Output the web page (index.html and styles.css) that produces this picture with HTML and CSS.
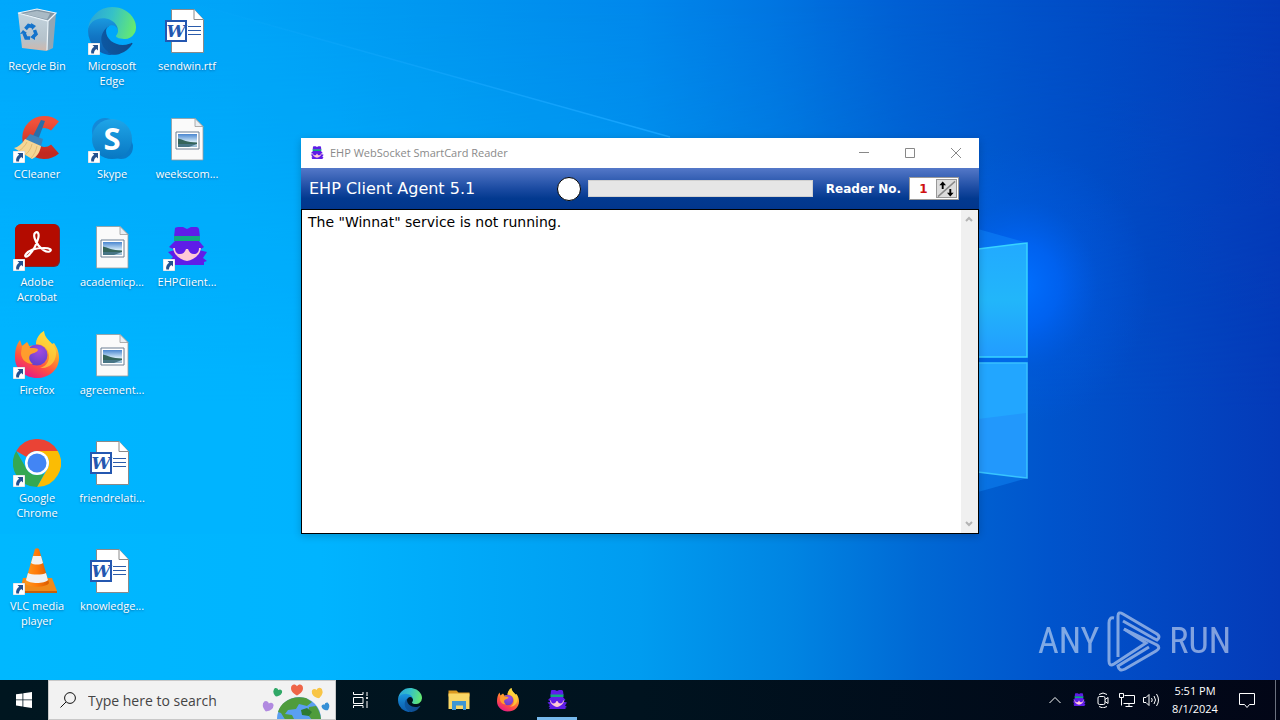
FILE: index.html
```html
<!DOCTYPE html>
<html lang="en">
<head>
  <meta charset="UTF-8" />
  <meta name="viewport" content="width=device-width, initial-scale=1.0" />
  <title>EHP WebSocket SmartCard Reader</title>
  <link rel="stylesheet" href="styles.css">
</head>
<body>
  <!-- shared icons -->
  <svg class="sprite" aria-hidden="true">
    <defs>
      <linearGradient id="edgeBlue" x1="0" y1="0" x2="1" y2="0"><stop offset="0" stop-color="#0c59a4"/><stop offset="1" stop-color="#114a8b"/></linearGradient>
      <linearGradient id="edgeMid" x1="0.4" y1="0" x2="0.4" y2="1"><stop offset="0" stop-color="#1b9de2"/><stop offset="0.5" stop-color="#1277c5"/><stop offset="1" stop-color="#0b5cae"/></linearGradient>
      <linearGradient id="edgeTop" x1="0" y1="0.4" x2="1" y2="0.6"><stop offset="0" stop-color="#2aa5d8"/><stop offset="0.45" stop-color="#35c1c8"/><stop offset="1" stop-color="#66eb6e"/></linearGradient>
      <linearGradient id="ffBody" x1="0.8" y1="0" x2="0.3" y2="1"><stop offset="0" stop-color="#fff44f"/><stop offset="0.4" stop-color="#ff9a2a"/><stop offset="0.7" stop-color="#ff4f42"/><stop offset="1" stop-color="#e5178a"/></linearGradient>
      <radialGradient id="ffGlobe" cx="0.6" cy="0.3" r="0.8"><stop offset="0" stop-color="#a44ae0"/><stop offset="1" stop-color="#5a3fc8"/></radialGradient>
      <linearGradient id="skypeFill" x1="0" y1="0" x2="0" y2="1"><stop offset="0" stop-color="#1fa5e8"/><stop offset="1" stop-color="#0877c2"/></linearGradient>
      <linearGradient id="ccRed" x1="0" y1="0" x2="0" y2="1"><stop offset="0" stop-color="#f0513a"/><stop offset="1" stop-color="#c22a20"/></linearGradient>
      <linearGradient id="coneFill" x1="0" y1="0" x2="1" y2="0"><stop offset="0" stop-color="#ff9a1e"/><stop offset="0.5" stop-color="#ff7a08"/><stop offset="1" stop-color="#d95c00"/></linearGradient>
      <linearGradient id="photoSky" x1="0" y1="0" x2="0" y2="1"><stop offset="0" stop-color="#4a86d0"/><stop offset="0.6" stop-color="#d3eaf8"/><stop offset="1" stop-color="#8fb6d0"/></linearGradient>
      <linearGradient id="binFront" x1="0" y1="0" x2="0" y2="1"><stop offset="0" stop-color="#c3d4de"/><stop offset="0.7" stop-color="#b5c2cb"/><stop offset="1" stop-color="#d0b8ac"/></linearGradient>
    </defs>

    <symbol id="shortcut" viewBox="0 0 12 12">
      <path fill="#fff" stroke="#9aa7b4" stroke-width="0.5" d="M0 0h12v12H0z"/>
      <path fill="#24518f" d="M4.500 2h5.500v5.500L8.300 5.900C6.600 7.200 6 8.300 6 10.500H3.300C2.600 7.600 3.800 5.300 6.200 3.700z"/>
    </symbol>

    <symbol id="bin" viewBox="0 0 48 48">
      <path fill="#8296a4" d="M5 6 24 2l19 4-8 8z"/>
      <path fill="#a9bac5" d="M10 6.500 24 4l13 2.500-3 6z"/>
      <path fill="url(#binFront)" d="M5 6l30 8-1 30-25-3z"/>
      <path fill="#93a6b4" d="M43 6l-8 8-1 30 6-3z"/>
      <path fill="none" stroke="#eef5fa" stroke-width="1.200" d="M5 6 24 2l19 4-8 8zM35 14l-1 29"/>
      <g fill="none" stroke="#1373cc" stroke-width="3.500">
        <path d="M12.500 22l3-3.500 4 1M21.500 23l1.500 4-3 3M17 31h-4l-2-5"/>
      </g>
      <path fill="#1373cc" d="M18 16l5 3-4 4zM22 27v6l-5-3zM7 27l3-4 4 3z"/>
    </symbol>

    <symbol id="edge" viewBox="0 0 256 256">
      <path fill="url(#edgeBlue)" d="M231.130 191.380a93.660 93.660 0 01-10.540 4.710 101.870 101.870 0 01-35.900 6.460c-47.320 0-88.540-32.550-88.540-74.320A31.480 31.480 0 01112.580 101c-42.800 1.800-53.800 46.400-53.800 72.530 0 73.880 68.090 81.370 82.760 81.370 7.910 0 19.840-2.300 27-4.560l1.310-.44a128.340 128.340 0 0066.600-52.800 4 4 0 00-5.320-5.720z"/>
      <path fill="url(#edgeMid)" d="M110.110 241.770a79.200 79.200 0 01-22.740-21.340 80.720 80.720 0 0125.210-119.430c3.120-1.470 8.450-4.130 15.540-4a32.350 32.350 0 0125.690 13 31.880 31.880 0 016.360 18.660c0-.21 24.460-79.600-80-79.600-43.900 0-80 41.660-80 78.210a130.150 130.150 0 0012.110 56 128 128 0 00156.380 67.110 75.550 75.550 0 01-62.780-8z"/>
      <path fill="url(#edgeTop)" d="M152.330 148.860c-.81 1.050-3.300 2.500-3.300 5.660 0 2.610 1.700 5.120 4.720 7.230 14.380 10 41.490 8.680 41.560 8.680a59.560 59.560 0 0030.270-8.350 61.380 61.380 0 0030.430-52.880c.26-22.410-8-37.310-11.340-43.910C223.460 23.840 177.720 0 128 0A128 128 0 000 126.200c.48-36.540 36.800-66.050 80-66.050 3.500 0 23.460.34 42 10.070 16.340 8.580 24.900 18.940 30.850 29.210 6.180 10.670 7.280 24.150 7.280 29.520s-2.740 13.330-7.800 19.910z"/>
    </symbol>

    <symbol id="word" viewBox="0 0 48 48">
      <path fill="#fff" stroke="#8a8a8a" d="M8.500 2.500h22.500l9.500 10v33h-32z"/>
      <path fill="#fff" stroke="#8a8a8a" d="M31 2.500v10h9.500"/>
      <path stroke="#2b5cab" stroke-width="1.200" d="M25 19.500h13M25 23.500h13M25 27.500h13"/>
      <path fill="#fff" stroke="#2457b0" stroke-width="2" d="M3 14h20v20H3z"/>
      <text class="word-letter" x="13" y="30" text-anchor="middle">W</text>
    </symbol>

    <symbol id="photo" viewBox="0 0 48 48">
      <path fill="#fafafa" stroke="#9a9a9a" stroke-width="0.800" d="M8.500 3.500h23.500l8 8v33.500h-31.500z"/>
      <path fill="#e9eef2" stroke="#9a9a9a" stroke-width="0.800" d="M32 3.500v8h8z"/>
      <path fill="#fff" stroke="#6c7f93" d="M13 17h23v17H13z"/>
      <path fill="url(#photoSky)" d="M15 19h19v13H15z"/>
      <path fill="#35645a" d="M15 23.500c5 1 9 4 19 4v1.500H15z"/>
      <path fill="#477585" d="M15 29h19l-8 3H15z"/>
    </symbol>

    <symbol id="ccleaner" viewBox="0 0 48 48">
      <path fill="none" stroke="url(#ccRed)" stroke-width="12" d="M42 11A16 15.500 0 1042 34"/>
      <path fill="#2a6ea8" d="M28 5l4 1-7 19-6-2z"/>
      <path fill="#3c83bb" d="M17 19l13 5-2 7-16-6z"/>
      <path fill="#f5d695" d="M12 24l16 7c-1 6-4 11-9 13L1 33c4-1 8-4 11-9z"/>
      <path fill="none" stroke="#e2bb74" d="M14 27c-2 4-5 7-8 9M19 29c-1 5-4 9-7 11M24 31c-1 5-3 9-6 12"/>
    </symbol>

    <symbol id="skype" viewBox="0 0 48 48">
      <circle cx="17" cy="16" r="13" fill="#1489d8"/>
      <circle cx="33" cy="32" r="12" fill="#0a7bc8"/>
      <circle cx="24" cy="24" r="20" fill="url(#skypeFill)"/>
      <text class="skype-letter" x="24" y="35" text-anchor="middle">S</text>
    </symbol>

    <symbol id="acrobat" viewBox="0 0 48 48">
      <rect x="2" y="1" width="45" height="43" rx="6" fill="#7b2730"/>
      <rect x="2" y="1" width="44" height="42" rx="6" fill="#b30b00"/>
      <path fill="none" stroke="#fff" stroke-width="2.200" stroke-linejoin="round" d="M22 10c3-2.500 4.500 1 3 6-1.700 6-5.500 12.500-9 16-3 3-5 1.500-3-1 3-4 11-6 18-6 6 0 8.500 2 5.500 3.500-3 1-7.500-2-11-6C22 18 20 12 22 10z"/>
    </symbol>

    <symbol id="spy" viewBox="0 0 48 48">
      <path fill="#5f1de8" d="M12 5c1-1 3-1 4-1h4l4 2 4-2h4c2 0 3 0 4 2l1 8H11z"/>
      <path fill="#10aa82" d="M11 13h26v5H11z"/>
      <path fill="#5f1de8" d="M12 18h24l5 6-3 2H10l-4-2z"/>
      <path fill="#5f1de8" d="M5 29l7-2h24l8 2-4 6 4 3-3 1v3H8l2-4-3-1 3-3z"/>
      <path fill="#ffc9d6" d="M10 24h28c0 8-8 13-14 14-6-1-14-6-14-14z"/>
      <path fill="#5f1de8" d="M9 23h30v2h-3c0 4-2 6-5 6s-5-2-6-5h-2c-1 3-3 5-6 5s-5-2-5-6H9z"/>
    </symbol>

    <symbol id="firefox" viewBox="0 0 48 48">
      <path fill="url(#ffBody)" d="M2 27C2 20 3 14 7 9l2 6 5-4c1 1 2 3 2 4l7-1c0-6 3-11 8-14 0 6 5 9 8 13l2-1c4 6 5 10 5 15 0 12-10 20-22 20S2 38 2 27z"/>
      <circle cx="24" cy="24" r="10.500" fill="url(#ffGlobe)"/>
      <path fill="#ff9d2d" d="M9 15l5-3 3 5c3 0 8 0 8 2-1 3-6 3-8 5-2 3 0 7 3 9-8 0-12-6-12-11z"/>
      <path fill="#ffd83c" fill-opacity="0.700" d="M31 0c-5 3-8 8-8 13 8 0 14 6 13 14-1 6-5 9-9 10 11 1 17-8 16-17-1-8-12-11-12-20z"/>
    </symbol>

    <symbol id="chrome" viewBox="0 0 48 48">
      <path fill="#ea4335" d="M3.200 12A24 24 0 0144.800 12H24a12 12 0 00-10.400 6z"/>
      <path fill="#fbbc04" d="M44.800 12A24 24 0 0124 48l10.400-18A12 12 0 0034.400 18L24 12z"/>
      <path fill="#34a853" d="M24 48A24 24 0 013.200 12l10.400 18A12 12 0 0024 36l7-1z"/>
      <circle cx="24" cy="24" r="12" fill="#fff"/>
      <circle cx="24" cy="24" r="9.500" fill="#4285f4"/>
    </symbol>

    <symbol id="vlc" viewBox="0 0 48 48">
      <path fill="#f08a1a" d="M10 31h29l5 13H7z"/>
      <path fill="#c85f08" d="M7 44h37v2H7z"/>
      <path fill="url(#coneFill)" d="M22 2c1-1 3-1 4 0l10 34c-3 5-21 5-24 0z"/>
      <path fill="#f1f1f1" d="M20 9h8l2 7c-3 2-9 2-12 0zM15 26c4 2 14 2 18 0l2 7c-3 4-19 4-22 0z"/>
    </symbol>

    <symbol id="folder" viewBox="0 0 48 48">
      <path fill="#dc9a20" d="M3 5h16l4 4h22v8H3z"/>
      <path fill="#fad766" d="M3 11h42v31H3z"/>
      <path fill="#3f96d2" d="M10 26h28v18h-6v-9H18v9h-8z"/>
    </symbol>

    <symbol id="heart" viewBox="0 0 14 14">
      <path d="M7 13.500C4 12 0 9 0 5 0 0 5-0.500 7 2.500 9-0.500 14 0 14 5c0 4-4 7-7 8.500z"/>
    </symbol>
  </svg>

  <main class="desktop">
    <svg class="wallpaper" viewBox="0 0 1280 680" preserveAspectRatio="none" aria-hidden="true">
      <defs>
        <linearGradient id="sky" x1="0" x2="1" y1="0" y2="0">
          <stop offset="0" stop-color="#00a8fc"/>
          <stop offset="0.180" stop-color="#00a4f8"/>
          <stop offset="0.350" stop-color="#0096f0"/>
          <stop offset="0.500" stop-color="#0088ec"/>
          <stop offset="0.600" stop-color="#0076e2"/>
          <stop offset="0.700" stop-color="#0060d4"/>
          <stop offset="0.800" stop-color="#0052ca"/>
          <stop offset="1" stop-color="#043ab8"/>
        </linearGradient>
        <linearGradient id="skyLow" x1="0" x2="1" y1="0" y2="0">
          <stop offset="0" stop-color="#00b8ff"/>
          <stop offset="0.250" stop-color="#00b4ff"/>
          <stop offset="0.500" stop-color="#009cf0"/>
          <stop offset="0.620" stop-color="#0084e2"/>
          <stop offset="0.720" stop-color="#0068d4"/>
          <stop offset="0.820" stop-color="#0054cc"/>
          <stop offset="1" stop-color="#043ab8"/>
        </linearGradient>
        <linearGradient id="fadeDown" x1="0" x2="0" y1="0" y2="1"><stop offset="0" stop-color="#000"/><stop offset="0.600" stop-color="#fff"/></linearGradient>
        <mask id="lowMask"><path fill="url(#fadeDown)" d="M0 0h1280v680H0z"/></mask>
        <radialGradient id="glow"><stop offset="0" stop-color="#0070ff"/><stop offset="0.300" stop-color="#0068ff" stop-opacity="0.700"/><stop offset="0.600" stop-color="#0060f0" stop-opacity="0.250"/><stop offset="1" stop-color="#0060f0" stop-opacity="0"/></radialGradient>
        <linearGradient id="pane" x1="0" x2="0" y1="0" y2="1"><stop offset="0" stop-color="#22aaff"/><stop offset="0.500" stop-color="#22b6fa"/><stop offset="1" stop-color="#229cff"/></linearGradient>
        <linearGradient id="beam" x1="0" x2="1" y1="0" y2="0"><stop offset="0" stop-color="#1ab0ff" stop-opacity="0"/><stop offset="1" stop-color="#1aa4ff"/></linearGradient>
      </defs>
      <path fill="url(#sky)" d="M0 0h1280v680H0z"/>
      <path fill="url(#skyLow)" mask="url(#lowMask)" d="M0 0h1280v680H0z"/>
      <ellipse cx="1020" cy="285" rx="130" ry="140" fill="url(#glow)"/>
      <path stroke="url(#beam)" stroke-width="1.500" d="M180 0l490 137"/>
      <path fill="#00b0ff" fill-opacity="0.120" d="M0 0h180l490 137H300v397H0z"/>
      <path fill="#1590ff" fill-opacity="0.400" d="M978 229l50 14-50 7zM978 472l50 6-50 14z"/>
      <path fill="#0068e8" d="M978 357h50v6h-50z"/>
      <path fill="url(#pane)" stroke="#38d4ff" stroke-width="1.500" d="M970 250l57-7v114h-57z"/>
      <path fill="#2298fc" stroke="#38c4ff" stroke-width="1.500" d="M970 363h57v115l-57-7z"/>
      <path fill="#22a6ff" d="M970 364h56v49l-56 7z"/>
    </svg>

    <div class="icons">
      <a class="icon" href="#"><span class="picture"><svg><use href="#bin"/></svg></span><span class="label">Recycle Bin</span></a>
      <a class="icon" href="#"><span class="picture"><svg><use href="#ccleaner"/></svg><svg class="arrow"><use href="#shortcut"/></svg></span><span class="label">CCleaner</span></a>
      <a class="icon" href="#"><span class="picture"><svg><use href="#acrobat"/></svg><svg class="arrow"><use href="#shortcut"/></svg></span><span class="label">Adobe Acrobat</span></a>
      <a class="icon" href="#"><span class="picture"><svg><use href="#firefox"/></svg><svg class="arrow"><use href="#shortcut"/></svg></span><span class="label">Firefox</span></a>
      <a class="icon" href="#"><span class="picture"><svg><use href="#chrome"/></svg><svg class="arrow"><use href="#shortcut"/></svg></span><span class="label">Google Chrome</span></a>
      <a class="icon" href="#"><span class="picture"><svg><use href="#vlc"/></svg><svg class="arrow"><use href="#shortcut"/></svg></span><span class="label">VLC media player</span></a>

      <a class="icon" href="#"><span class="picture"><svg><use href="#edge"/></svg><svg class="arrow"><use href="#shortcut"/></svg></span><span class="label">Microsoft Edge</span></a>
      <a class="icon" href="#"><span class="picture"><svg><use href="#skype"/></svg><svg class="arrow"><use href="#shortcut"/></svg></span><span class="label">Skype</span></a>
      <a class="icon" href="#"><span class="picture"><svg><use href="#photo"/></svg></span><span class="label">academicp...</span></a>
      <a class="icon" href="#"><span class="picture"><svg><use href="#photo"/></svg></span><span class="label">agreement...</span></a>
      <a class="icon" href="#"><span class="picture"><svg><use href="#word"/></svg></span><span class="label">friendrelati...</span></a>
      <a class="icon" href="#"><span class="picture"><svg><use href="#word"/></svg></span><span class="label">knowledge...</span></a>

      <a class="icon" href="#"><span class="picture"><svg><use href="#word"/></svg></span><span class="label">sendwin.rtf</span></a>
      <a class="icon" href="#"><span class="picture"><svg><use href="#photo"/></svg></span><span class="label">weekscom...</span></a>
      <a class="icon" href="#"><span class="picture"><svg><use href="#spy"/></svg><svg class="arrow"><use href="#shortcut"/></svg></span><span class="label">EHPClient...</span></a>
    </div>

    <section class="window">
      <div class="titlebar">
        <svg class="app-icon"><use href="#spy"/></svg>
        <h1>EHP WebSocket SmartCard Reader</h1>
        <button type="button" aria-label="Minimize"><svg viewBox="0 0 10 10"><path d="M0 4.500h10"/></svg></button>
        <button type="button" aria-label="Maximize"><svg viewBox="0 0 10 10"><path d="M0.500 0.500h9v9h-9z"/></svg></button>
        <button type="button" aria-label="Close"><svg viewBox="0 0 10 10"><path d="M0 0l10 10M10 0L0 10"/></svg></button>
      </div>
      <div class="toolbar">
        <h2>EHP Client Agent 5.1</h2>
        <span class="lamp"></span>
        <progress value="0" max="100" aria-label="Progress"></progress>
        <label for="reader">Reader No.</label>
        <div class="spinner">
          <input type="text" id="reader" value="1">
          <button type="button" aria-label="Change reader">
            <svg viewBox="0 0 20 18">
              <path stroke="#888" stroke-width="1.500" d="M1 17L19 1"/>
              <path d="M6 1l3.500 4H7v4H5V5H2.500zM14 17l-3.500-4H13V9h2v4h2.500z"/>
            </svg>
          </button>
        </div>
      </div>
      <div class="log">
        <textarea readonly aria-label="Log">The "Winnat" service is not running.</textarea>
        <div class="scrollbar">
          <button type="button" aria-label="Scroll up"><svg viewBox="0 0 8 6"><path d="M1 5l3-3 3 3"/></svg></button>
          <button type="button" aria-label="Scroll down"><svg viewBox="0 0 8 6"><path d="M1 1l3 3 3-3"/></svg></button>
        </div>
      </div>
    </section>

    <div class="watermark">
      <span>ANY</span>
      <svg viewBox="0 0 54 62">
        <path d="M7 8Q2 7 2 13V51Q2 57 7 54L39 33 17 19"/>
        <path d="M11 47V6Q11 1 16 4L50 24Q54 27 50 30L46 28 16 11"/>
        <path d="M17 19L50 35Q54 38 49 41L18 59Q12 62 11 56L42 37"/>
      </svg>
      <span>RUN</span>
    </div>
  </main>

  <footer class="taskbar">
    <button type="button" class="start" aria-label="Start">
      <svg viewBox="0 0 16 16"><path fill="#fff" d="M0 2.300l6.500-.9v6.100H0zM7.300 1.300L16 0v7.500H7.300zM0 8.300h6.500v6.200L0 13.600zM7.300 8.300H16V16l-8.700-1.300z"/></svg>
    </button>
    <div class="search">
      <svg class="lens" viewBox="0 0 16 16"><circle cx="10" cy="6" r="5.400"/><path d="M6 10L0.500 15.500"/></svg>
      <input type="text" placeholder="Type here to search" aria-label="Type here to search">
      <svg class="earth" viewBox="0 0 72 38">
        <circle cx="38" cy="38" r="22" fill="#5a9ff2"/>
        <path fill="#4f9c3c" d="M24 21c5-4 13-6 21-4l6 4-5 4-8-2-3 5-8 1-3 4 7 1 3 6H25l-5-8-3-1c1-4 4-8 7-10zM48 26l7-1c3 4 5 9 5 15h-8l-5-6z"/>
        <path fill="#2d7a32" d="M40 29l6-2 5 4-3 4-7-1z"/>
        <use href="#heart" x="30" y="3" width="12" height="12" fill="#ef6548"/>
        <use href="#heart" x="12" y="7" width="9" height="9" fill="#31a867" transform="rotate(20 16 11)"/>
        <use href="#heart" x="51" y="7" width="11" height="11" fill="#f8c545" transform="rotate(-15 56 12)"/>
        <use href="#heart" x="1" y="20" width="11" height="11" fill="#b18ae0" transform="rotate(20 6 26)"/>
        <use href="#heart" x="61" y="22" width="8" height="8" fill="#3590d6" transform="rotate(-30 65 26)"/>
      </svg>
    </div>
    <nav class="apps">
      <button type="button" aria-label="Task view">
        <svg class="small line" viewBox="0 0 16 16"><path d="M0.500 0v2.500h9.500V0M0.500 5.500h9.500v6H0.500zM0.500 16v-2.500h9.500V16M14 0v4M14 9v7"/><path fill="#fff" d="M13.500 5.500h1v1h-1z"/></svg>
      </button>
      <button type="button" aria-label="Microsoft Edge"><svg><use href="#edge"/></svg></button>
      <button type="button" aria-label="File Explorer"><svg><use href="#folder"/></svg></button>
      <button type="button" aria-label="Firefox"><svg><use href="#firefox"/></svg></button>
      <button type="button" class="running" aria-label="EHP Client Agent"><svg><use href="#spy"/></svg></button>
    </nav>
    <div class="tray">
      <button type="button" aria-label="Show hidden icons"><svg class="line" viewBox="0 0 16 16"><path d="M2.500 11L8 5.500l5.500 5.500"/></svg></button>
      <button type="button" aria-label="EHP Client Agent"><svg><use href="#spy"/></svg></button>
      <button type="button" aria-label="Meet Now"><svg class="line" viewBox="0 0 16 16"><rect x="3" y="4.500" width="7" height="8" rx="1.500"/><path d="M10 7.500l3-2v6l-3-2M4 2.500q4-3 8 0M4 14.500q4 3 8 0"/></svg></button>
      <button type="button" aria-label="Network"><svg class="line" viewBox="0 0 16 16"><path d="M5.500 3.500h10v8h-11M0.500 1.500h4v4h-4zM2.500 5.500v8M10 11.500v3M6.500 14.500h7"/></svg></button>
      <button type="button" aria-label="Volume"><svg class="line" viewBox="0 0 16 16"><path d="M0.500 5.500h2.500l3-3v11l-3-3H0.500zM8.500 6q1.500 2 0 4M11 4q3 4 0 8M13.500 2q4 6 0 12"/></svg></button>
    </div>
    <div class="clock">
      <time>5:51 PM</time>
      <time>8/1/2024</time>
    </div>
    <button type="button" class="notices" aria-label="Notifications"><svg class="line" viewBox="0 0 16 16"><path d="M0.500 1.500h15v11h-5L8 15.500 5.500 12.500h-5z"/></svg></button>
    <button type="button" class="peek" aria-label="Show desktop"></button>
  </footer>
</body>
</html>
```
FILE: styles.css
```css
* {
  box-sizing: border-box;
}
body {
  margin: 0;
  height: 100vh;
  display: flex;
  flex-direction: column;
  overflow: hidden;
  font-family: "Open Sans", "Noto Sans", sans-serif;
  font-size: 12px;
}
h1, h2 {
  margin: 0;
  font-weight: normal;
}
button {
  display: flex;
  align-items: center;
  justify-content: center;
  padding: 0;
  border: none;
  background: none;
  color: inherit;
  font: inherit;
}
.sprite {
  position: absolute;
  width: 0;
  height: 0;
}
.word-letter {
  fill: #2457b0;
  font: italic bold 17px "DejaVu Serif", serif;
}
.skype-letter {
  fill: #fff;
  font: bold 31px "Open Sans", sans-serif;
}

/* desktop */
.desktop {
  flex: 1;
  position: relative;
  overflow: hidden;
  background-color: #0078e0;
}
.wallpaper {
  position: absolute;
  width: 100%;
  height: 100%;
}
.icons {
  position: relative;
  display: grid;
  grid-auto-flow: column;
  grid-template-rows: repeat(6, 108px);
  grid-auto-columns: 74px;
  column-gap: 1px;
  padding-top: 7px;
}
.icon {
  display: flex;
  flex-direction: column;
  align-items: center;
  gap: 3px;
  color: #fff;
  text-decoration: none;
}
.picture {
  position: relative;
  width: 48px;
  height: 48px;
}
.picture svg {
  display: block;
  width: 48px;
  height: 48px;
}
.picture .arrow {
  position: absolute;
  left: 0;
  bottom: 0;
  width: 12px;
  height: 12px;
}
.label {
  font-size: 11px;
  line-height: 15px;
  text-align: center;
  padding: 0 4px;
  text-shadow: 0 1px 2px rgba(0, 40, 90, 0.5);
}

/* application window */
.window {
  position: absolute;
  left: 301px;
  top: 138px;
  width: 678px;
  height: 396px;
  display: flex;
  flex-direction: column;
  background-color: #fff;
  box-shadow: 0 2px 8px rgba(0, 0, 0, 0.2);
}
.titlebar {
  display: flex;
  align-items: center;
  height: 30px;
  color: #8a8a8a;
}
.titlebar h1 {
  flex: 1;
  font-size: 11px;
  line-height: 14px;
}
.titlebar button {
  width: 46px;
  height: 28px;
}
.titlebar button svg {
  width: 10px;
  height: 10px;
  fill: none;
  stroke: #888;
}
.app-icon {
  width: 16px;
  height: 16px;
  margin: 0 5px 0 8px;
}
.toolbar {
  display: flex;
  align-items: center;
  height: 41px;
  padding: 0 20px 0 8px;
  color: #fff;
  font-family: "DejaVu Sans", sans-serif;
  background: linear-gradient(#5478c8, #1b4ba2 50%, #02398f 75%, #02368c);
}
.toolbar h2 {
  flex: 1;
  font-size: 16px;
}
.lamp {
  width: 24px;
  height: 24px;
  margin-right: 7px;
  border: 1px solid #000;
  border-radius: 50%;
  background-color: #fff;
}
progress {
  appearance: none;
  width: 225px;
  height: 17px;
  margin-right: 13px;
  border: 1px solid #d0d0d0;
  background-color: #e6e6e6;
}
progress::-webkit-progress-bar {
  background-color: #e6e6e6;
}
.toolbar label {
  margin-right: 8px;
  font-size: 12px;
  font-weight: bold;
}
.spinner {
  display: flex;
  align-items: center;
  width: 50px;
  height: 23px;
  padding: 1px;
  border: 1px solid #9a9a9a;
  background-color: #fff;
}
.spinner input {
  flex: 1;
  min-width: 0;
  padding: 0;
  border: none;
  color: #d01010;
  font: bold 12px "DejaVu Sans", sans-serif;
  text-align: center;
}
.spinner button {
  width: 21px;
  height: 19px;
  border: 1px solid #999;
  background-color: #dcdcdc;
}
.spinner svg {
  width: 20px;
  height: 18px;
}
.log {
  flex: 1;
  display: flex;
  border: 1px solid #000;
}
.log textarea {
  flex: 1;
  padding: 3px 6px;
  border: none;
  outline: none;
  resize: none;
  color: #000;
  font: 14px/18px "DejaVu Sans", sans-serif;
}
.scrollbar {
  display: flex;
  flex-direction: column;
  justify-content: space-between;
  width: 17px;
  background-color: #f0f0f0;
}
.scrollbar button {
  width: 15px;
  height: 18px;
}
.scrollbar svg {
  width: 8px;
  height: 6px;
  fill: none;
  stroke: #b4b4b4;
  stroke-width: 2;
}

.watermark {
  position: absolute;
  right: 49px;
  bottom: 8px;
  display: flex;
  align-items: center;
  gap: 8px;
  color: #fff;
  font: 36px "Liberation Sans Narrow", "Roboto Condensed", Roboto, sans-serif;
  opacity: 0.5;
}
.watermark svg {
  width: 54px;
  height: 62px;
  fill: none;
  stroke: #fff;
  stroke-width: 3;
}

/* taskbar */
.taskbar {
  display: flex;
  align-items: stretch;
  height: 40px;
  color: #fff;
  background: linear-gradient(90deg, #001620, #00131f 50%, #020617);
}
.line {
  fill: none;
  stroke: #fff;
}
.start {
  width: 48px;
}
.start svg {
  width: 16px;
  height: 16px;
}
.search {
  position: relative;
  display: flex;
  align-items: center;
  gap: 12px;
  width: 288px;
  padding-left: 11px;
  border: 1px solid #c8c8c8;
  background-color: #f2f2f2;
}
.lens {
  width: 16px;
  height: 16px;
  fill: none;
  stroke: #111;
}
.search input {
  flex: 1;
  min-width: 0;
  padding: 0;
  border: none;
  outline: none;
  background: none;
  font: 14px "Open Sans", "Noto Sans", sans-serif;
}
.search input::placeholder {
  color: #444;
}
.earth {
  position: absolute;
  right: 2px;
  bottom: 0;
  width: 72px;
  height: 38px;
}
.apps {
  flex: 1;
  display: flex;
}
.apps button {
  width: 49px;
  padding: 0 4px;
  border: solid transparent;
  border-width: 3px 0;
}
.apps svg {
  width: 24px;
  height: 24px;
}
.apps .small {
  width: 16px;
  height: 16px;
}
.apps .running {
  width: 40px;
  margin-left: 5px;
  border-bottom-color: #76b9ed;
}
.tray {
  display: flex;
  margin-right: 8px;
}
.tray button {
  width: 24px;
}
.tray svg {
  width: 16px;
  height: 16px;
}
.clock {
  display: flex;
  flex-direction: column;
  justify-content: center;
  width: 48px;
  font-size: 11px;
  line-height: 18px;
  text-align: center;
  white-space: nowrap;
}
.notices {
  width: 56px;
}
.notices svg {
  width: 16px;
  height: 16px;
}
.peek {
  width: 5px;
  border-left: 1px solid #6c7280;
}
```
